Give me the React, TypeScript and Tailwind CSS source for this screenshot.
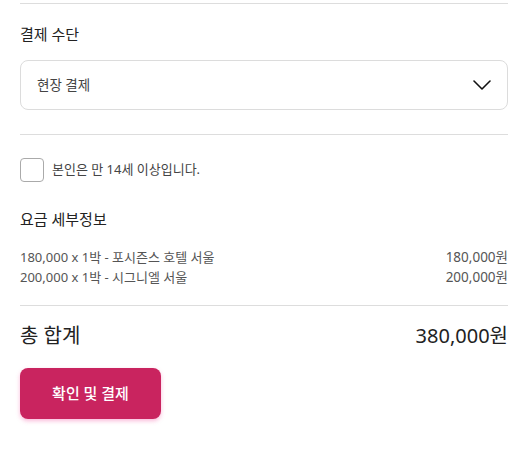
import React from 'react';

const rows = [
  { label: '180,000 x 1박 - 포시즌스 호텔 서울', price: '180,000원' },
  { label: '200,000 x 1박 - 시그니엘 서울', price: '200,000원' },
];

export default function App() {
  return (
    <div
      className="w-[528px] h-[474px] bg-white px-5 pt-[3px] text-[#333]"
      style={{ fontFamily: '"Noto Sans", "Noto Sans CJK KR", sans-serif' }}
    >
      <div className="border-t border-[#dddddd]" />

      {/* 결제 수단 */}
      <h2 className="mt-[19px] text-[15px] leading-[22px] font-normal text-[#222]">결제 수단</h2>
      <div className="mt-[15px] h-[50px] rounded-lg border border-[#dcdcdc] flex items-center justify-between pl-4 pr-4">
        <span className="text-[13.5px] text-[#444]">현장 결제</span>
        <svg width="18" height="10" viewBox="0 0 18 10" fill="none">
          <path d="M1 1l8 8 8-8" stroke="#111" strokeWidth="1.6" strokeLinecap="round" strokeLinejoin="round" />
        </svg>
      </div>
      <div className="mt-[24px] border-t border-[#dddddd]" />

      {/* 나이 확인 */}
      <label className="mt-[23px] flex items-center gap-2">
        <span className="w-6 h-6 rounded border border-[#aaaaaa] bg-white" />
        <span className="text-[13px] text-[#444]">본인은 만 14세 이상입니다.</span>
      </label>

      {/* 요금 세부정보 */}
      <h2 className="mt-[26px] text-[15px] leading-[22px] font-normal text-[#222]">요금 세부정보</h2>
      <div className="mt-[17px] flex flex-col">
        {rows.map((row, i) => (
          <div key={i} className="flex justify-between items-center leading-[20px] text-[#555]">
            <span className="text-[13px]">{row.label}</span>
            <span className="text-[13.5px]">{row.price}</span>
          </div>
        ))}
      </div>
      <div className="mt-[18px] border-t border-[#dddddd]" />

      {/* 총 합계 */}
      <div className="mt-[16px] flex justify-between items-center text-[20px] leading-[28px] font-normal text-[#222]">
        <span>총 합계</span>
        <span>380,000원</span>
      </div>

      <button className="mt-[18px] w-[141px] h-[51px] rounded-lg bg-[#c9245f] text-white text-[15px] font-medium shadow-[0_2px_4px_rgba(240,60,150,0.35)]">
        확인 및 결제
      </button>
    </div>
  );
}
